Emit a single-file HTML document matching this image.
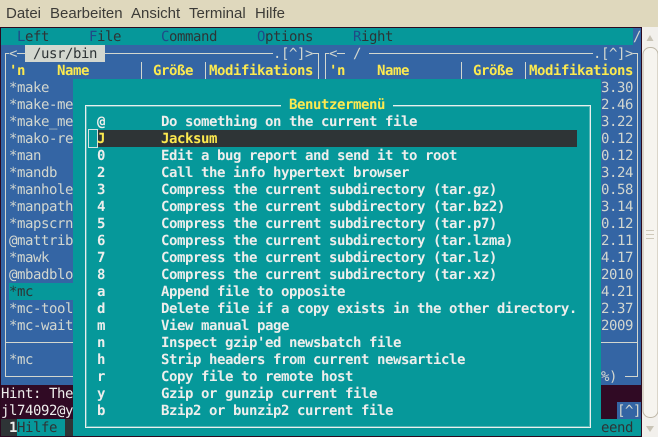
<!DOCTYPE html>
<html><head><meta charset="utf-8"><style>
html,body{margin:0;padding:0;width:658px;height:437px;overflow:hidden;background:#dfd8bd}
div{position:absolute}
.t{font:14px/19px "DejaVu Sans Mono",monospace;letter-spacing:-.43px;white-space:pre;height:17px;overflow:hidden;text-rendering:geometricPrecision}
.b{font-weight:bold}
.m{position:absolute;top:5px;font:15px/18px "Liberation Sans",sans-serif;color:#3c3b37;white-space:pre}
.l{color:#d3d7cf}.y{color:#fce94f}.d{color:#2e3436}.h{color:#eeeeec}
.f{left:9px;width:64px;overflow:hidden}
</style></head><body>
<span class="m" style="left:6px">Datei</span>
<span class="m" style="left:50px">Bearbeiten</span>
<span class="m" style="left:131px">Ansicht</span>
<span class="m" style="left:189px">Terminal</span>
<span class="m" style="left:255px">Hilfe</span>

<div style="left:0;top:27px;width:642px;height:410px;background:#2c0a20"></div>
<div style="left:1px;top:28px;width:640px;height:408px;background:#3465a4"></div>
<div style="left:1px;top:28px;width:632px;height:17px;background:#06989a"></div>
<div class="t" style="left:17px;top:28px;color:#204a87">L<span class="d">eft</span></div>
<div class="t" style="left:89px;top:28px;color:#204a87">F<span class="d">ile</span></div>
<div class="t" style="left:161px;top:28px;color:#204a87">C<span class="d">ommand</span></div>
<div class="t" style="left:257px;top:28px;color:#204a87">O<span class="d">ptions</span></div>
<div class="t" style="left:353px;top:28px;color:#204a87">R<span class="d">ight</span></div>
<div class="t l" style="left:633px;top:28px">/</div>

<!-- panel frames -->
<div style="left:5px;top:53px;width:314px;height:324px;border:1px solid #d3d7cf;box-sizing:border-box"></div>
<div style="left:325px;top:53px;width:313px;height:324px;border:1px solid #d3d7cf;box-sizing:border-box"></div>
<div style="left:5px;top:342px;width:314px;height:1px;background:#d3d7cf"></div>
<div style="left:325px;top:342px;width:313px;height:1px;background:#d3d7cf"></div>
<div class="t l" style="left:9px;top:45px;width:8px;background:#3465a4">&lt;</div>
<div class="t d" style="left:25px;top:45px;width:80px;background:#d3d7cf"> /usr/bin </div>
<div class="t l" style="left:273px;top:45px;width:40px;background:#3465a4">.[^]&gt;</div>
<div class="t l" style="left:329px;top:45px;width:8px;background:#3465a4">&lt;</div>
<div class="t l" style="left:345px;top:45px;width:24px;background:#3465a4"> / </div>
<div class="t l" style="left:593px;top:45px;width:40px;background:#3465a4">.[^]&gt;</div>

<div class="t y b" style="left:9px;top:62px">'n</div>
<div class="t y b" style="left:57px;top:62px">Name</div>
<div class="t y b" style="left:153px;top:62px">Größe</div>
<div class="t y b" style="left:209px;top:62px">Modifikations</div>
<div class="t y b" style="left:329px;top:62px">'n</div>
<div class="t y b" style="left:377px;top:62px">Name</div>
<div class="t y b" style="left:473px;top:62px">Größe</div>
<div class="t y b" style="left:529px;top:62px">Modifikations</div>
<div style="left:141px;top:62px;width:1px;height:17px;background:#d3d7cf"></div>
<div style="left:205px;top:62px;width:1px;height:17px;background:#d3d7cf"></div>
<div style="left:461px;top:62px;width:1px;height:17px;background:#d3d7cf"></div>
<div style="left:525px;top:62px;width:1px;height:17px;background:#d3d7cf"></div>

<!-- file list -->
<div class="t l f" style="top:79px">*make</div>
<div class="t l f" style="top:96px">*make-me</div>
<div class="t l f" style="top:113px">*make_me</div>
<div class="t l f" style="top:130px">*mako-re</div>
<div class="t l f" style="top:147px">*man</div>
<div class="t l f" style="top:164px">*mandb</div>
<div class="t l f" style="top:181px">*manhole</div>
<div class="t l f" style="top:198px">*manpath</div>
<div class="t l f" style="top:215px">*mapscrn</div>
<div class="t l f" style="top:232px">@mattrib</div>
<div class="t l f" style="top:249px">*mawk</div>
<div class="t l f" style="top:266px">@mbadblo</div>
<div class="t d f" style="top:283px;background:#06989a">*mc</div>
<div class="t l f" style="top:300px">*mc-tool</div>
<div class="t l f" style="top:317px">*mc-wait</div>
<div class="t l f" style="top:351px">*mc</div>

<div class="t l" style="left:601px;top:79px">3.30</div>
<div class="t l" style="left:601px;top:96px">2.46</div>
<div class="t l" style="left:601px;top:113px">3.22</div>
<div class="t l" style="left:601px;top:130px">0.12</div>
<div class="t l" style="left:601px;top:147px">0.12</div>
<div class="t l" style="left:601px;top:164px">3.24</div>
<div class="t l" style="left:601px;top:181px">0.58</div>
<div class="t l" style="left:601px;top:198px">3.14</div>
<div class="t l" style="left:601px;top:215px">0.12</div>
<div class="t l" style="left:601px;top:232px">2.11</div>
<div class="t l" style="left:601px;top:249px">4.17</div>
<div class="t l" style="left:601px;top:266px">2010</div>
<div class="t l" style="left:601px;top:283px">4.21</div>
<div class="t l" style="left:601px;top:300px">2.37</div>
<div class="t l" style="left:601px;top:317px">2009</div>
<div class="t l" style="left:601px;top:368px;background:#3465a4;width:24px">%)</div>

<!-- hint / prompt / fkeys -->
<div style="left:1px;top:385px;width:640px;height:34px;background:#300a24"></div>
<div class="t h" style="left:1px;top:385px">Hint: The</div>
<div class="t h" style="left:1px;top:402px">jl74092@y</div>
<div class="t l" style="left:617px;top:402px;width:24px;background:#3465a4">[^]</div>
<div style="left:1px;top:419px;width:640px;height:17px;background:#06989a"></div>
<div class="t h b" style="left:1px;top:419px;width:16px;background:#2e3436"> 1</div>
<div class="t d" style="left:17px;top:419px">Hilfe</div>
<div style="left:65px;top:419px;width:8px;height:17px;background:#2e3436"></div>
<div class="t d" style="left:601px;top:419px">eend</div>

<!-- dialog -->
<div style="left:73px;top:79px;width:528px;height:357px;background:#06989a"></div>
<div style="left:85px;top:105px;width:506px;height:323px;border:1px solid #e8f0ee;box-sizing:border-box;box-shadow:inset 0 0 0 1px rgba(238,238,236,.35)"></div>
<div class="t y b" style="left:281px;top:96px;width:112px;text-align:center;background:#06989a">Benutzermenü</div>
<div style="left:97px;top:130px;width:480px;height:17px;background:#2e3436"></div>
<div style="left:88px;top:129px;width:8px;height:17px;border:1px solid #d3e4e2"></div>

<div class="t h b" style="left:97px;top:113px">@       Do something on the current file</div>
<div class="t y b" style="left:97px;top:130px">J       Jacksum</div>
<div class="t h b" style="left:97px;top:147px">0       Edit a bug report and send it to root</div>
<div class="t h b" style="left:97px;top:164px">2       Call the info hypertext browser</div>
<div class="t h b" style="left:97px;top:181px">3       Compress the current subdirectory (tar.gz)</div>
<div class="t h b" style="left:97px;top:198px">4       Compress the current subdirectory (tar.bz2)</div>
<div class="t h b" style="left:97px;top:215px">5       Compress the current subdirectory (tar.p7)</div>
<div class="t h b" style="left:97px;top:232px">6       Compress the current subdirectory (tar.lzma)</div>
<div class="t h b" style="left:97px;top:249px">7       Compress the current subdirectory (tar.lz)</div>
<div class="t h b" style="left:97px;top:266px">8       Compress the current subdirectory (tar.xz)</div>
<div class="t h b" style="left:97px;top:283px">a       Append file to opposite</div>
<div class="t h b" style="left:97px;top:300px">d       Delete file if a copy exists in the other directory.</div>
<div class="t h b" style="left:97px;top:317px">m       View manual page</div>
<div class="t h b" style="left:97px;top:334px">n       Inspect gzip'ed newsbatch file</div>
<div class="t h b" style="left:97px;top:351px">h       Strip headers from current newsarticle</div>
<div class="t h b" style="left:97px;top:368px">r       Copy file to remote host</div>
<div class="t h b" style="left:97px;top:385px">y       Gzip or gunzip current file</div>
<div class="t h b" style="left:97px;top:402px">b       Bzip2 or bunzip2 current file</div>

<!-- scrollbar -->
<div style="left:642px;top:27px;width:16px;height:410px;background:#f2f0ec"></div>
<svg style="position:absolute;left:642px;top:27px" width="16" height="410">
<path d="M8 8L4.5 14H11.5Z" fill="#c9c4b6"/>
<rect x="1" y="20.5" width="15" height="370" rx="7" fill="#f6f4ef" stroke="#bdb6a6"/>
<path d="M4 399H12L8 405Z" fill="#c9c4b6"/>
<path d="M4 203.5H12M4 207.5H12M4 211.5H12" stroke="#cfc9ba"/>
</svg>
</body></html>
